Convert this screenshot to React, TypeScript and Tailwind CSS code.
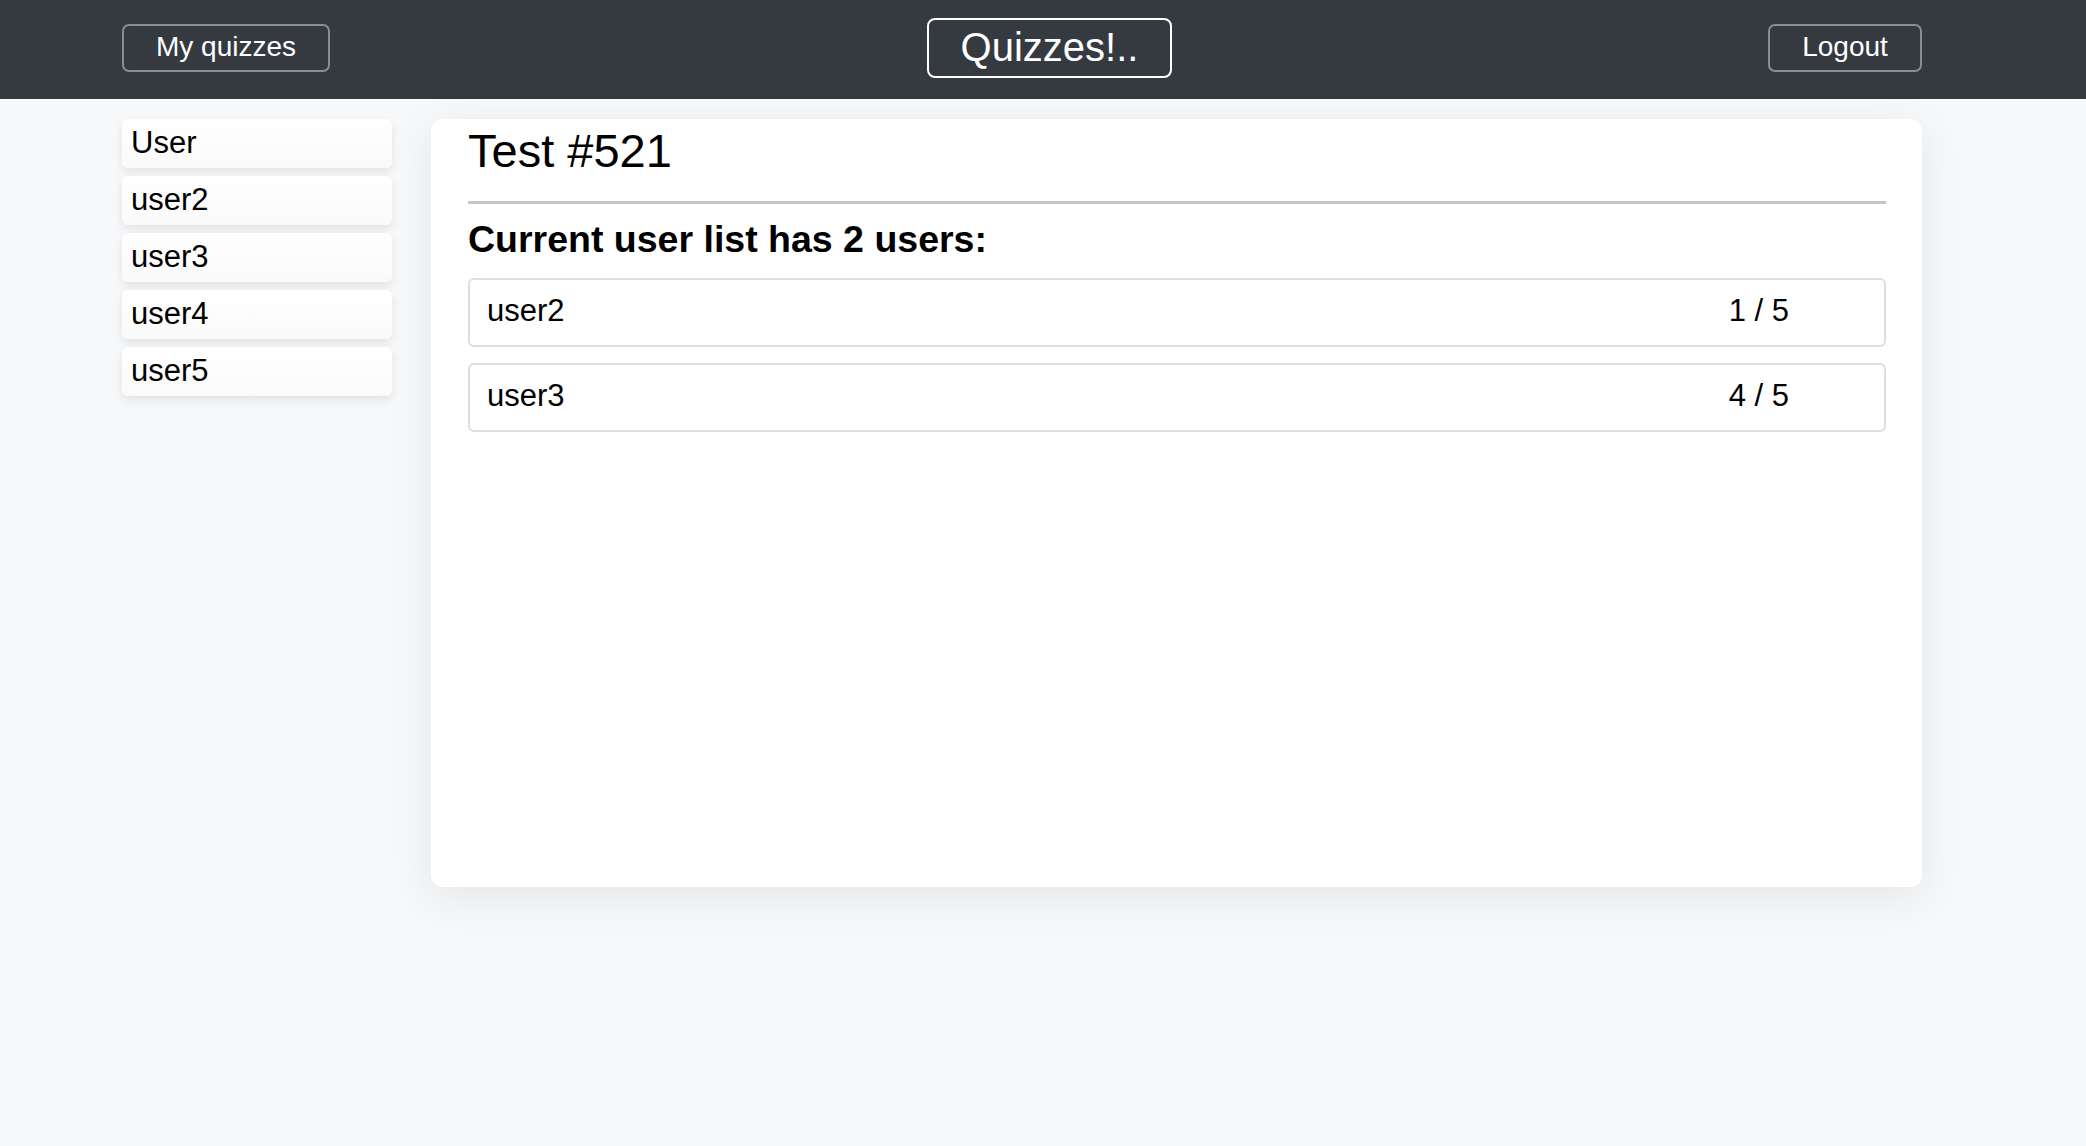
import React from 'react';

const sideUsers = ['User', 'user2', 'user3', 'user4', 'user5'];

const results = [
  { name: 'user2', score: '1 / 5' },
  { name: 'user3', score: '4 / 5' },
];

function NavButton({ label, className }: { label: string; className: string }) {
  return (
    <button className={`flex items-center justify-center text-white pb-[2px] ${className}`}>
      {label}
    </button>
  );
}

export default function App() {
  return (
    <div
      className="min-h-screen bg-[#f7f8fa] text-black"
      style={{ fontFamily: '"Liberation Sans", Arial, sans-serif' }}
    >
      <header className="h-[99px] bg-[#343a40] flex items-center pl-[122px] pr-[164px] pb-[3px]">
        <div className="flex-1 flex">
          <NavButton
            label="My quizzes"
            className="w-[208px] h-[48px] border-2 border-[#8b8d90] rounded-[7px] text-[28px]"
          />
        </div>
        <NavButton
          label="Quizzes!.."
          className="ml-[55px] w-[245px] h-[60px] border-2 border-white rounded-[8px] text-[40px]"
        />
        <div className="flex-1 flex justify-end">
          <NavButton
            label="Logout"
            className="w-[154px] h-[48px] border-2 border-[#8b8d90] rounded-[7px] text-[28px]"
          />
        </div>
      </header>

      <main className="flex items-start gap-[39px] pt-[20px] pl-[122px] pr-[164px]">
        {/* sidebar user list */}
        <aside className="w-[270px] flex flex-col gap-[8px]">
          {sideUsers.map((u) => (
            <div
              key={u}
              className="h-[49px] flex items-center pl-[9px] pb-[3px] rounded-[6px] bg-gradient-to-b from-white to-[#fafafa] shadow-[0_4px_10px_rgba(0,0,0,0.09)] text-[31px] leading-none"
            >
              {u}
            </div>
          ))}
        </aside>

        <section className="flex-1 h-[768px] rounded-[12px] bg-white shadow-[0_10px_45px_rgba(0,0,0,0.08)] pl-[37px] pr-[36px] pt-[5px]">
          <h1 className="text-[47px] leading-[54px]">Test #521</h1>
          <div className="mt-[23px] h-[3px] bg-[#c6c6c6]" />
          <h2 className="mt-[13px] text-[37.5px] leading-[44px] font-bold">
            Current user list has 2 users:
          </h2>
          <div className="mt-[17px] flex flex-col gap-[16px]">
            {results.map((r) => (
              <div
                key={r.name}
                className="h-[69px] flex items-center border-2 border-[#dedede] rounded-[6px] pl-[17px] pr-[95px] pb-[2px] text-[31px]"
              >
                <span>{r.name}</span>
                <span className="ml-auto">{r.score}</span>
              </div>
            ))}
          </div>
        </section>
      </main>
    </div>
  );
}
